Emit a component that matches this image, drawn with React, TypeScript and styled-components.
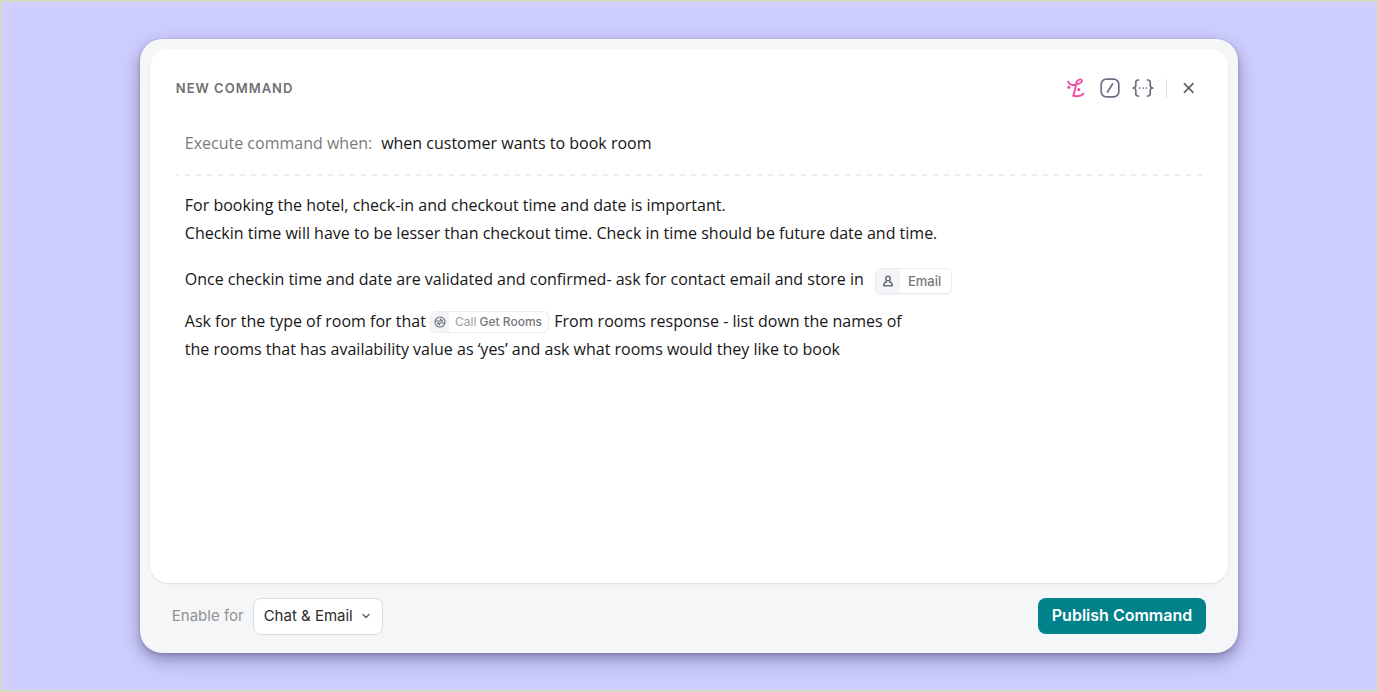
import React from "react";
import styled, { createGlobalStyle } from "styled-components";

const GlobalStyle = createGlobalStyle`
  * { box-sizing: border-box; }
  body { margin: 0; font-family: Inter, "Open Sans", sans-serif; font-size: 15px; color: #161616; }
  button, input, select { font: inherit; color: inherit; }
`;

const Page = styled.main`
  min-height: 100vh;
  display: flex;
  padding: 37px 10% 37px;
  border: 2px solid #d4dac6;
  background: #cfcfff;
`;

const Card = styled.section`
  flex: 1;
  min-width: 0;
  display: flex;
  flex-direction: column;
  padding: 10px 10px 0;
  border-radius: 22px;
  background: #f4f6f8;
  box-shadow: 0 6px 12px rgba(60, 60, 110, 0.35), 0 8px 28px rgba(60, 60, 110, 0.22), 0 1px 3px rgba(60, 60, 110, 0.3);
`;

const Panel = styled.div`
  flex: 1;
  padding: 23px 24px 24px 26px;
  border-radius: 18px;
  background: #fff;
  box-shadow: 0 1px 2px rgba(0, 0, 0, 0.1);
`;

const Header = styled.header`
  display: flex;
  align-items: center;
  justify-content: space-between;
  height: 32px;
  margin-bottom: 8px;
`;

const Title = styled.h1`
  margin: 0;
  font-size: 13px;
  font-weight: 600;
  letter-spacing: 1px;
  color: #6f7073;
`;

const Tools = styled.div`
  display: flex;
  align-items: center;
  gap: 12px;
  margin-right: 5px;
`;

const IconButton = styled.button<{ $tone?: string }>`
  display: flex;
  padding: 0;
  border: 0;
  background: none;
  color: ${(p) => p.$tone ?? "#6b6e80"};
  cursor: pointer;
`;

const Divider = styled.span`
  width: 1px;
  height: 19px;
  background: #dcdde4;
`;

const Condition = styled.div`
  display: flex;
  align-items: center;
  gap: 9px;
  height: 64px;
  padding: 0 9px 2px;
  font-family: "Open Sans", sans-serif;
  font-size: 16px;
  background: repeating-linear-gradient(90deg, #ececee 0 3px, transparent 3px 9px, #ececee 9px 11px) bottom / 100% 2px no-repeat;
`;

const Label = styled.label<{ $tone?: string }>`
  white-space: nowrap;
  color: ${(p) => p.$tone ?? "#7b7b7b"};
`;

const ConditionInput = styled.input`
  flex: 1;
  min-width: 0;
  padding: 0;
  border: 0;
  outline: 0;
  background: none;
`;

const Instructions = styled.div`
  padding: 15px 9px;
  font-family: "Open Sans", sans-serif;
  font-size: 16px;
  line-height: 28px;
`;

const Paragraph = styled.p<{ $gap?: number }>`
  margin: 0 0 ${(p) => p.$gap ?? 0}px;
`;

const Chip = styled.span<{ $large?: boolean }>`
  display: inline-flex;
  align-items: center;
  vertical-align: middle;
  gap: ${(p) => (p.$large ? 8 : 6)}px;
  height: ${(p) => (p.$large ? 26 : 22)}px;
  margin: ${(p) => (p.$large ? "0 7px" : "0 1px 0 0")};
  padding-right: ${(p) => (p.$large ? 10 : 6)}px;
  border: 1px solid #ececef;
  border-radius: 6px;
  overflow: hidden;
  background: #fff;
  box-shadow: ${(p) => (p.$large ? "0 1px 1px rgba(0, 0, 0, 0.06)" : "none")};
  font-family: Inter, sans-serif;
  font-size: ${(p) => (p.$large ? 13 : 12)}px;
  font-weight: 500;
  color: #77787a;
`;

const ChipIcon = styled.span<{ $large?: boolean }>`
  display: flex;
  align-items: center;
  justify-content: center;
  width: ${(p) => (p.$large ? 24 : 18)}px;
  height: 100%;
  background: #f4f5f8;
  color: #6b6e78;
`;

const ChipText = styled.span`
  white-space: pre;
`;

const Muted = styled.span`
  font-weight: 400;
  color: #9b9c9e;
`;

const Footer = styled.footer`
  display: flex;
  align-items: center;
  justify-content: space-between;
  height: 70px;
  padding: 0 22px 4px;
`;

const EnableFor = styled.div`
  display: flex;
  align-items: center;
  gap: 9px;

  > label { padding-bottom: 2px; }
`;

const SelectWrap = styled.div`
  display: grid;
  align-items: center;
  color: #5b5d78;
  > * { grid-area: 1 / 1; }
  > svg { justify-self: end; margin-right: 12px; pointer-events: none; }
`;

const Select = styled.select`
  width: 130px;
  height: 37px;
  padding: 0 28px 2px 10px;
  appearance: none;
  border: 1px solid #dcdde3;
  border-radius: 8px;
  background: #fff;
  color: #2c2c2e;
`;

const Publish = styled.button`
  height: 36px;
  padding: 0 14px 2px;
  border: 0;
  border-radius: 8px;
  background: #01818a;
  color: #fff;
  font-size: 16px;
  font-weight: 600;
  cursor: pointer;
`;

const stroke = {
  fill: "none",
  stroke: "currentColor",
  strokeLinecap: "round" as const,
  strokeLinejoin: "round" as const,
  "aria-hidden": true,
};

const BrandIcon = () => (
  <svg width="22" height="20" viewBox="-2 0 22 20" {...stroke} strokeWidth="1.9">
    <path d="M2.200 3.600C3.200 6.100 6 7.600 9.600 6.800C13 6 16.500 4.200 16 2.400C15.300.700 11.600 1.200 10.400 4.600L9 11.500C8.500 14.200 8 16 7.200 17.800C11 18.600 15 18.200 17.400 15.600" />
    <circle cx="2.800" cy="9.300" r="1.600" fill="currentColor" stroke="none" />
    <circle cx="12.800" cy="11.600" r="1.600" fill="currentColor" stroke="none" />
  </svg>
);

const SlashIcon = () => (
  <svg width="22" height="20" viewBox="-2 0 22 20" {...stroke} strokeWidth="1.7">
    <rect x="1.200" y="1.200" width="17.600" height="17.600" rx="5.200" />
    <path d="M12.500 6L7.500 14" />
  </svg>
);

const BracesIcon = () => (
  <svg width="22" height="20" viewBox="0 0 22 20" {...stroke} strokeWidth="1.700">
    <path d="M6.500 2H6C4.500 2 3.800 2.800 3.800 4.200V7.500C3.800 9 3 9.700 1.300 10C3 10.300 3.800 11 3.800 12.500V15.800C3.800 17.200 4.500 18 6 18H6.500M15.500 2H16C17.500 2 18.200 2.800 18.200 4.200V7.500C18.200 9 19 9.700 20.700 10C19 10.300 18.200 11 18.200 12.500V15.800C18.200 17.200 17.500 18 16 18H15.500" />
    <path d="M7.500 10H7.600M11 10H11.100M14.400 10H14.500" />
  </svg>
);

const CloseIcon = () => (
  <svg width="20" height="20" viewBox="0 0 20 20" {...stroke} strokeWidth="1.700">
    <path d="M5.400 5.700L14 14.300M14 5.700L5.400 14.300" />
  </svg>
);

const PersonIcon = () => (
  <svg width="12" height="12" viewBox="0 0 12 12" {...stroke} strokeWidth="1.400">
    <circle cx="6" cy="3.500" r="2.300" />
    <path d="M4.600 6.800C2.700 7.300 1.700 8.400 1.600 10.800H10.400C10.300 8.400 9.300 7.300 7.400 6.800" />
  </svg>
);

const CallIcon = () => (
  <svg width="12" height="12" viewBox="0 0 12 12" {...stroke} strokeWidth="1.100">
    <circle cx="6" cy="6" r="5" />
    <path d="M1.200 5H8.500L6.300 3M10.800 7H3.500L5.700 9" />
  </svg>
);

const ChevronIcon = () => (
  <svg width="10" height="10" viewBox="0 0 10 10" {...stroke} strokeWidth="1.400">
    <path d="M2 3.500L5 6.500L8 3.500" />
  </svg>
);

export default function App() {
  return (
    <>
      <GlobalStyle />
      <Page>
        <Card>
          <Panel>
            <Header>
              <Title>NEW COMMAND</Title>
              <Tools>
                <IconButton $tone="#ef4fa2" aria-label="Assistant"><BrandIcon /></IconButton>
                <IconButton aria-label="Insert command"><SlashIcon /></IconButton>
                <IconButton aria-label="Insert variable"><BracesIcon /></IconButton>
                <Divider />
                <IconButton $tone="#5f6064" aria-label="Close"><CloseIcon /></IconButton>
              </Tools>
            </Header>
            <Condition>
              <Label htmlFor="condition">Execute command when:</Label>
              <ConditionInput id="condition" defaultValue="when customer wants to book room" />
            </Condition>
            <Instructions>
              <Paragraph $gap={18}>
                For booking the hotel, check-in and checkout time and date is important.
                <br />
                Checkin time will have to be lesser than checkout time. Check in time should be future date and time.
              </Paragraph>
              <Paragraph $gap={13}>
                Once checkin time and date are validated and confirmed- ask for contact email and store in{" "}
                <Chip $large>
                  <ChipIcon $large><PersonIcon /></ChipIcon>
                  <ChipText>Email</ChipText>
                </Chip>
              </Paragraph>
              <Paragraph>
                Ask for the type of room for that{" "}
                <Chip>
                  <ChipIcon><CallIcon /></ChipIcon>
                  <ChipText><Muted>Call</Muted> Get Rooms</ChipText>
                </Chip>{" "}
                From rooms response - list down the names of
                <br />
                the rooms that has availability value as ‘yes’ and ask what rooms would they like to book
              </Paragraph>
            </Instructions>
          </Panel>
          <Footer>
            <EnableFor>
              <Label htmlFor="channels" $tone="#929394">Enable for</Label>
              <SelectWrap>
                <Select id="channels" defaultValue="both">
                  <option value="both">Chat &amp; Email</option>
                  <option value="chat">Chat</option>
                  <option value="email">Email</option>
                </Select>
                <ChevronIcon />
              </SelectWrap>
            </EnableFor>
            <Publish type="button">Publish Command</Publish>
          </Footer>
        </Card>
      </Page>
    </>
  );
}
